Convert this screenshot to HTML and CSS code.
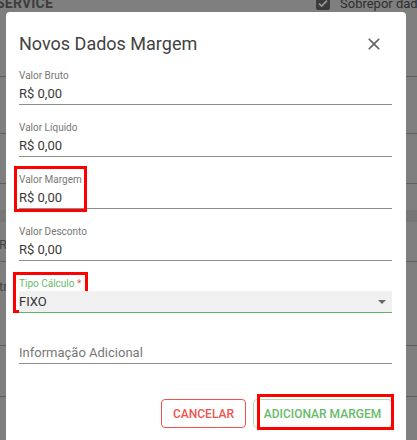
FILE: index.html
```html
<!DOCTYPE html>
<html lang="pt-BR">
<head>
  <meta charset="UTF-8">
  <meta name="viewport" content="width=device-width, initial-scale=1.0">
  <title>Novos Dados Margem</title>
  <link rel="stylesheet" href="styles.css">
</head>
<body>
<div class="page">
  <div class="row row-top">
    <span class="service">SERVICE</span>
    <span class="check"><svg width="14" height="14" viewBox="0 0 14 14"><path d="M3 7.5l2.6 2.6L11 4.6" fill="none" stroke="#9a9a9a" stroke-width="1.6"/></svg></span>
    <span class="sobrepor">Sobrepor dados</span>
  </div>
  <div class="row row-a"></div>
  <div class="row row-b"></div>
  <div class="row row-c"></div>
  <div class="row row-band"></div>
  <div class="row row-d"><span class="edge-text">RA</span></div>
  <div class="row row-e"><span class="edge-text">tr</span></div>
  <div class="row row-f"></div>
  <div class="row row-g"></div>
</div>

<div class="dialog">
  <div class="dialog-head">
    <h2>Novos Dados Margem</h2>
    <span class="close"><svg width="20" height="20" viewBox="0 0 24 24"><path d="M19 6.41L17.59 5 12 10.59 6.41 5 5 6.41 10.59 12 5 17.59 6.41 19 12 13.41 17.59 19 19 17.59 13.41 12z" fill="#666"/></svg></span>
  </div>

  <div class="field">
    <label>Valor Bruto</label>
    <div class="value">R$ 0,00</div>
  </div>
  <div class="field">
    <label>Valor Líquido</label>
    <div class="value">R$ 0,00</div>
  </div>
  <div class="field">
    <span class="mark mark-margem"></span>
    <label>Valor Margem</label>
    <div class="value">R$ 0,00</div>
  </div>
  <div class="field">
    <label>Valor Desconto</label>
    <div class="value">R$ 0,00</div>
  </div>
  <div class="field field-select">
    <span class="mark mark-tipo"></span>
    <label class="label-active">Tipo Cálculo <span class="req">*</span></label>
    <div class="select">FIXO<span class="arrow"></span></div>
  </div>
  <div class="field field-info">
    <div class="value placeholder">Informação Adicional</div>
  </div>

  <div class="actions">
    <button class="btn btn-cancel">Cancelar</button>
    <button class="btn btn-add">Adicionar Margem<span class="mark mark-add"></span></button>
  </div>
</div>
</body>
</html>
```

FILE: styles.css
```css
body {
  margin: 0;
  background: #7f7f7f;
  font-family: Roboto, 'Noto Sans', sans-serif;
  overflow: hidden;
  height: 440px;
}
.page {
  width: 417px;
}
.row {
  border-bottom: 1px solid #5f5f5f;
  box-sizing: border-box;
}
.row-top {
  display: flex;
  align-items: flex-start;
  margin-top: -5px;
  height: 82px;
}
.service {
  font-size: 14px;
  font-weight: 700;
  line-height: 16px;
  color: #3d3d3d;
  margin-left: -4px;
  letter-spacing: 0.2px;
}
.check {
  flex-shrink: 0;
  width: 14px;
  height: 14px;
  background: #3b3b3b;
  border-radius: 2px;
  margin-left: auto;
  margin-top: 1px;
  display: flex;
}
.sobrepor {
  flex-shrink: 0;
  width: 77px;
  overflow: hidden;
  font-size: 13px;
  line-height: 16px;
  color: #2e2e2e;
  margin-left: 10px;
  margin-top: 1px;
  white-space: nowrap;
}
.row-a { height: 57px; }
.row-b { height: 50px; }
.row-c { height: 26px; border-bottom: none; }
.row-band { height: 12px; background: #767676; border-bottom: none; }
.row-d { height: 40px; padding-top: 12px; }
.row-e { height: 84px; padding-top: 14px; }
.row-f { height: 51px; }
.row-g { height: 43px; border-bottom: none; }
.edge-text {
  font-size: 13px;
  color: #444;
  margin-left: -1px;
}

/* dialog */
.dialog {
  position: absolute;
  left: 6px;
  top: 12px;
  width: 400px;
  height: 440px;
  background: #fff;
  border-radius: 4px;
  box-sizing: border-box;
  padding: 20px 14px 0 13px;
}
.dialog-head {
  display: flex;
  justify-content: space-between;
  align-items: center;
  height: 24px;
  margin-bottom: 14px;
}
.dialog-head h2 {
  margin: 0;
  font-size: 18px;
  font-weight: 400;
  line-height: 24px;
  color: #424242;
}
.close {
  display: flex;
  margin-right: 8px;
}
.field {
  position: relative;
  margin-bottom: 17px;
}
.field label {
  display: block;
  font-size: 10px;
  line-height: 12px;
  color: #777;
  margin-bottom: 2px;
}
.value {
  font-size: 13px;
  line-height: 20px;
  color: #3a3a3a;
  border-bottom: 1px solid #8d8d8d;
}
.label-active { color: #66bb6a !important; margin-bottom: 1px !important; }
.req { color: #ef5350; }
.select {
  position: relative;
  background: #f0f0f0;
  font-size: 13px;
  line-height: 21px;
  color: #333;
  border-bottom: 1px solid #5cb860;
}
.arrow {
  position: absolute;
  right: 6px;
  top: 9px;
  border-left: 4px solid transparent;
  border-right: 4px solid transparent;
  border-top: 4px solid #666;
}
.field-info {
  padding-top: 13px;
}
.placeholder { color: #777; }

.actions {
  display: flex;
  justify-content: flex-end;
  gap: 7px;
  margin-top: 35px;
}
.btn {
  position: relative;
  height: 29px;
  padding: 0;
  background: #fff;
  border-radius: 4px;
  font-family: Roboto, sans-serif;
  font-size: 12px;
  font-weight: 500;
  text-transform: uppercase;
  text-align: center;
  cursor: pointer;
}
.btn-cancel {
  width: 85px;
  border: 1px solid #ef5350;
  color: #ef5350;
}
.btn-add {
  width: 139px;
  border: 1px solid #b5dbb6;
  color: #66bb6a;
}

/* red highlight boxes */
.mark {
  position: absolute;
  border: 3px solid #ff0000;
  box-sizing: border-box;
}
.mark-margem { left: -5px; top: -8px; width: 73px; height: 46px; }
.mark-tipo { left: -6px; top: -6px; width: 75px; height: 41px; }
.mark-add { left: 3px; top: -6px; width: 137px; height: 36px; }
```
